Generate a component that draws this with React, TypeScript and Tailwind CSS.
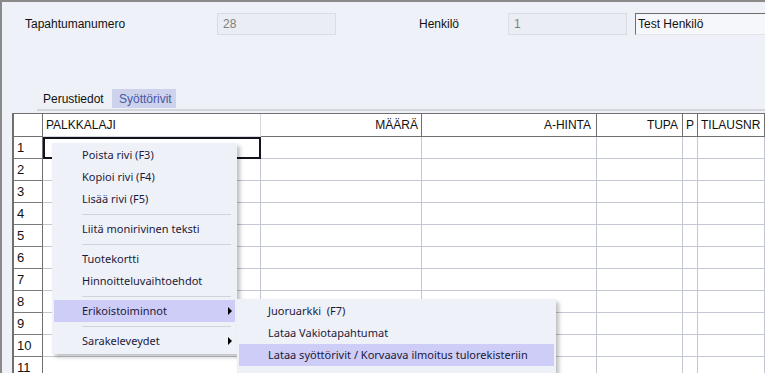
const columns = [
  { label: 'PALKKALAJI', width: 'w-[218px]', align: 'justify-start pl-[3px]', light: true },
  { label: 'MÄÄRÄ', width: 'w-[161px]', align: 'justify-end pr-[3px]' },
  { label: 'A-HINTA', width: 'w-[175px]', align: 'justify-end pr-[5px]' },
  { label: 'TUPA', width: 'w-[86px]', align: 'justify-end pr-[4px]' },
  { label: 'P', width: 'w-[15px]', align: 'justify-center' },
  { label: 'TILAUSNR', width: 'w-[67px]', align: 'justify-start pl-[3px]' },
]

const rows = [1, 2, 3, 4, 5, 6, 7, 8, 9, 10, 11]

type MenuEntry = { label?: string; sep?: boolean; active?: boolean; sub?: boolean }

const contextMenu: MenuEntry[] = [
  { label: 'Poista rivi (F3)' },
  { label: 'Kopioi rivi (F4)' },
  { label: 'Lisää rivi (F5)' },
  { sep: true },
  { label: 'Liitä monirivinen teksti' },
  { sep: true },
  { label: 'Tuotekortti' },
  { label: 'Hinnoitteluvaihtoehdot' },
  { sep: true },
  { label: 'Erikoistoiminnot', active: true, sub: true },
  { sep: true },
  { label: 'Sarakeleveydet', sub: true },
]

const subMenu: MenuEntry[] = [
  { label: 'Juoruarkki  (F7)' },
  { label: 'Lataa Vakiotapahtumat' },
  { label: 'Lataa syöttörivit / Korvaava ilmoitus tulorekisteriin', active: true },
]

function Arrow() {
  return (
    <span className="ml-auto mr-[3px] w-0 h-0 border-y-[4px] border-y-transparent border-l-[4px] border-l-black" />
  )
}

function MenuItems({ items, indent }: { items: MenuEntry[]; indent: string }) {
  return (
    <>
      {items.map((item, i) =>
        item.sep ? (
          <div key={i} className="h-[8px] flex items-center">
            <div className="ml-[30px] mr-[6px] h-px flex-1 bg-[#d0d3dc]" />
          </div>
        ) : (
          <div
            key={i}
            className={`mx-[2px] h-[22px] flex items-center whitespace-pre ${indent} ${item.active ? 'bg-[#cdcdf7]' : ''}`}
          >
            {item.label}
            {item.sub && <Arrow />}
          </div>
        )
      )}
    </>
  )
}

export default function App() {
  return (
    <div className="relative w-[765px] h-[373px] overflow-hidden bg-[#eef1f8] border-t-2 border-l-2 border-[#8a8a8a] font-['Liberation_Sans',Arial,sans-serif] text-[12px] text-[#111]">
      {/* header fields */}
      <div className="flex items-center mt-[11px] h-[22px]">
        <div className="w-[215px] shrink-0 pl-[23px]">Tapahtumanumero</div>
        <div className="w-[119px] shrink-0 h-[22px] flex items-center pl-[5px] bg-[#eaedf3] border border-[#d9dce4] text-[#808080]">28</div>
        <div className="w-[172px] shrink-0 pl-[83px]">Henkilö</div>
        <div className="w-[119px] shrink-0 h-[22px] flex items-center pl-[5px] bg-[#eaedf3] border border-[#d9dce4] text-[#808080]">1</div>
        <div className="ml-[8px] w-[140px] shrink-0 h-[22px] flex items-center pl-[2px] bg-[#f6f7fa] border-t border-l border-[#6e6e6e] border-b border-b-[#e2e4ea]">Test Henkilö</div>
      </div>

      {/* tabs */}
      <div className="flex mt-[54px] ml-[38px] h-[19px] items-center">
        <div className="w-[72px] h-full flex items-center pl-[3px]">Perustiedot</div>
        <div className="w-[64px] h-full flex items-center pl-[7px] bg-[#cdd3ec] text-[#4b57a3]">Syöttörivit</div>
      </div>
      <div className="ml-[35px] mt-[1px] h-[2px] bg-[#d4d6dc]" />

      {/* grid */}
      <div className="ml-[10px] mt-[2px] w-[753px] bg-white border-t border-l-2 border-[#6f6f6f]">
        <div className="flex h-[23px]">
          <div className="w-[29px] shrink-0 border-r border-b border-[#6f6f6f]" />
          {columns.map((c) => (
            <div
              key={c.label}
              className={`${c.width} shrink-0 flex items-center ${c.align} border-r border-b ${c.light ? 'border-[#d6d8de]' : 'border-[#6f6f6f]'}`}
            >
              {c.label}
            </div>
          ))}
        </div>
        {rows.map((r) => (
          <div key={r} className="flex h-[22px]">
            <div className="w-[29px] shrink-0 flex items-center pl-[3px] text-[13px] border-r border-r-[#6f6f6f] border-b border-b-[#7a7a7a]">
              {r}
            </div>
            {columns.map((c, i) => (
              <div
                key={c.label}
                className={`${c.width} shrink-0 ${r === 1 && i === 0 ? 'border-2 border-[#141420]' : 'border-r border-b border-[#c3c6d3]'}`}
              />
            ))}
          </div>
        ))}
      </div>

      {/* context menu */}
      <div className="absolute left-[50px] top-[141px] w-[185px] pt-[1px] pb-[2px] bg-[#eff1f9] shadow-[3px_3px_4px_rgba(0,0,0,0.25)] font-['Noto_Sans',sans-serif] text-[11px] text-[#1c1a3a]">
        <MenuItems items={contextMenu} indent="pl-[28px]" />
      </div>

      {/* sub menu */}
      <div className="absolute left-[235px] top-[297px] w-[319px] pt-[1px] pb-[8px] bg-[#eff1f9] shadow-[3px_3px_4px_rgba(0,0,0,0.25)] font-['Noto_Sans',sans-serif] text-[11px] text-[#1c1a3a]">
        <MenuItems items={subMenu} indent="pl-[29px]" />
      </div>
    </div>
  )
}
